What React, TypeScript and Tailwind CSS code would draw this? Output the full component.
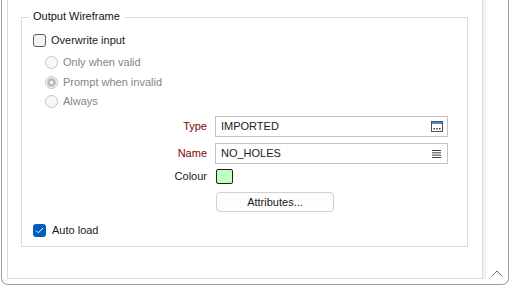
import React from "react";

function TypeIcon() {
  return (
    <svg width="12" height="11" viewBox="0 0 12 11">
      <rect x="0.5" y="0.5" width="11" height="10" fill="#ffffff" stroke="#3d5670" />
      <rect x="1" y="1" width="10" height="2" fill="#5b86b8" />
      <rect x="2.5" y="7" width="1.5" height="1.5" fill="#3a3a3a" />
      <rect x="5.25" y="7" width="1.5" height="1.5" fill="#3a3a3a" />
      <rect x="8" y="7" width="1.5" height="1.5" fill="#3a3a3a" />
    </svg>
  );
}

function ListIcon() {
  return (
    <svg width="9" height="8" viewBox="0 0 9 8">
      <rect x="0" y="0" width="9" height="1" fill="#404040" />
      <rect x="0" y="2.33" width="9" height="1" fill="#404040" />
      <rect x="0" y="4.66" width="9" height="1" fill="#404040" />
      <rect x="0" y="7" width="9" height="1" fill="#404040" />
    </svg>
  );
}

function Radio({ checked, label }: { checked?: boolean; label: string }) {
  return (
    <div className="flex items-center h-full">
      <div className="ml-[12px] w-[13px] h-[13px] rounded-full border border-[#c4c4c4] bg-[#f7f7f7] flex items-center justify-center">
        {checked && (
          <div className="w-[9px] h-[9px] rounded-full border-[3px] border-[#bdbdbd] bg-white" />
        )}
      </div>
      <span className="ml-[5px] text-[#858585]">{label}</span>
    </div>
  );
}

export default function App() {
  return (
    <div className="w-[509px] h-[287px] bg-white overflow-hidden font-['Liberation_Sans',Arial,sans-serif] text-[11px] text-[#1a1a1a] leading-none">
      <div className="ml-[1px] w-[508px] h-[285px] border-l border-r border-b border-[#9f9f9f] rounded-b-[7px] flex relative">
        <div className="pl-[5px]">
          <div className="w-[476px] h-[279px] border-l border-r border-b border-[#dcdcdc] pt-[17px] pl-[13px]">
            <div className="relative w-[447px] h-[230px] border border-[#dcdcdc] pt-[12px] pl-[11px] flex flex-col">
              <span className="absolute left-[7px] top-[-7px] bg-white px-[4px] text-[#111111]">
                Output Wireframe
              </span>
              <div className="h-[20px] flex items-center shrink-0">
                <div className="w-[13px] h-[13px] rounded-[3px] border border-[#5c5c5c] bg-[#f4f4f4]" />
                <span className="ml-[5px]">Overwrite input</span>
              </div>
              <div className="mt-[2px] h-[20px] shrink-0">
                <Radio label="Only when valid" />
              </div>
              <div className="h-[20px] shrink-0">
                <Radio checked label="Prompt when invalid" />
              </div>
              <div className="h-[19px] shrink-0">
                <Radio label="Always" />
              </div>
              <div className="mt-[5px] h-[21px] flex items-center shrink-0">
                <span className="w-[174px] text-right text-[#800000]">Type</span>
                <div className="ml-[8px] w-[233px] h-[21px] border border-[#c3c3c3] flex items-center pl-[5px] pr-[4px]">
                  <span className="flex-1">IMPORTED</span>
                  <TypeIcon />
                </div>
              </div>
              <div className="mt-[6px] h-[21px] flex items-center shrink-0">
                <span className="w-[174px] text-right text-[#800000]">Name</span>
                <div className="ml-[8px] w-[233px] h-[21px] border border-[#c3c3c3] flex items-center pl-[5px] pr-[6px]">
                  <span className="flex-1">NO_HOLES</span>
                  <ListIcon />
                </div>
              </div>
              <div className="mt-[3px] h-[18px] flex items-center shrink-0">
                <span className="w-[174px] text-right">Colour</span>
                <div className="ml-[9px] w-[17px] h-[15px] rounded-[2px] border border-[#1e1e1e] bg-[#c0ffc0]" />
              </div>
              <div className="mt-[7px] h-[20px] flex shrink-0">
                <div className="ml-[183px] w-[118px] h-[20px] rounded-[4px] border border-[#d0d0d0] bg-[#fdfdfd] flex items-center justify-center">
                  Attributes...
                </div>
              </div>
              <div className="mt-[8px] h-[20px] flex items-center shrink-0">
                <div className="w-[13px] h-[13px] rounded-[3px] bg-[#005fb8] flex items-center justify-center">
                  <svg width="9" height="7" viewBox="0 0 9 7">
                    <polyline points="1,3.5 3.3,5.8 8,1" fill="none" stroke="#ffffff" strokeWidth="1" />
                  </svg>
                </div>
                <span className="ml-[6px]">Auto load</span>
              </div>
            </div>
          </div>
        </div>
        <div className="w-[3px] h-[279px] bg-[#f2f2f2]" />
        <div className="flex-1 flex flex-col justify-end items-center pb-[7px]">
          <svg width="12" height="7" viewBox="0 0 12 7">
            <polyline points="0.5,6.5 6,1 11.5,6.5" fill="none" stroke="#707070" strokeWidth="1" />
          </svg>
        </div>
      </div>
    </div>
  );
}
